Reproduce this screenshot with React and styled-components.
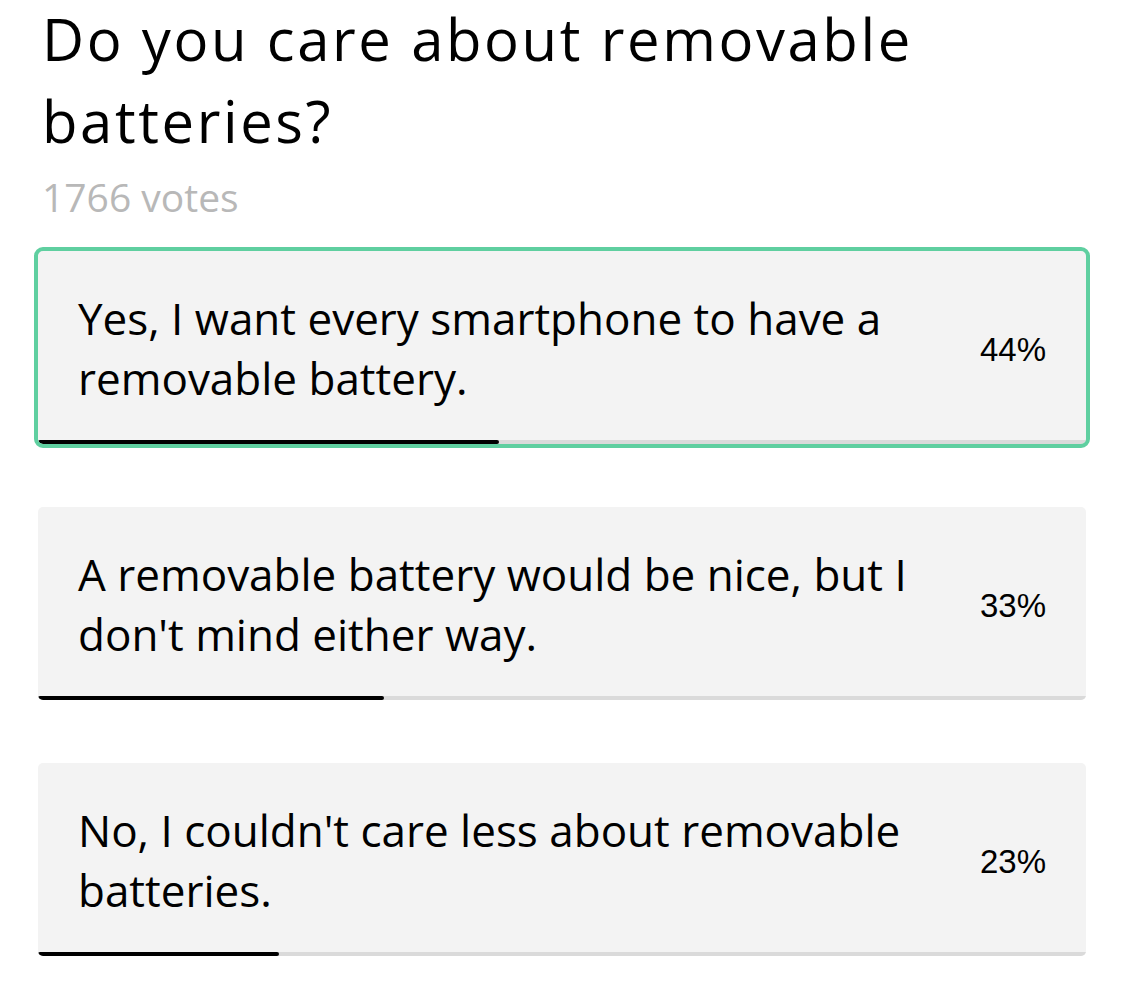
import React from "react";
import styled, { createGlobalStyle } from "styled-components";

const Global = createGlobalStyle`
  html, body { margin: 0; padding: 0; background: #fff; }
  body { font-family: "Open Sans", Lato, sans-serif; color: #000; }
`;

const Page = styled.div`
  padding: 0 39px 40px 38px;
`;

const Header = styled.header`
  padding: 0 0 0 4px;
`;

const Title = styled.h1`
  margin: -2px 0 0;
  font-family: "Open Sans", sans-serif;
  font-weight: 400;
  font-size: 58px;
  line-height: 82px;
  letter-spacing: 2.6px;
  color: #000;
  max-width: 960px;
`;

const Votes = styled.div`
  margin-top: 10px;
  font-size: 39px;
  line-height: 50px;
  color: #b8b8b8;
`;

const List = styled.div`
  margin-top: 29px;
  display: flex;
  flex-direction: column;
  gap: 63px;
`;

const Card = styled.div`
  height: 193px;
  display: flex;
  flex-direction: column;
  background: #f3f3f3;
  border-radius: 5px;
  outline: ${(p) => (p.$selected ? "4px solid #5fcfa0" : "none")};
  overflow: hidden;
`;

const Body = styled.div`
  flex: 1;
  display: flex;
  align-items: center;
  padding: 4px 40px 0;
`;

const Label = styled.div`
  flex: 1;
  font-size: 44px;
  line-height: 60px;
  color: #000;
  padding-right: 50px;
`;

const Percent = styled.div`
  margin-top: 4px;
  font-family: "Liberation Sans", Arial, sans-serif;
  font-size: 33px;
  color: #000;
`;

const Track = styled.div`
  height: 4px;
  background: #dadada;
`;

const Fill = styled.div`
  height: 100%;
  background: #000;
  border-radius: 2px;
`;

const options = [
  { label: "Yes, I want every smartphone to have a removable battery.", pct: 44, selected: true },
  { label: "A removable battery would be nice, but I don't mind either way.", pct: 33 },
  { label: "No, I couldn't care less about removable batteries.", pct: 23 },
];

export default function App() {
  return (
    <>
      <Global />
      <Page>
        <Header>
          <Title>Do you care about removable batteries?</Title>
          <Votes>1766 votes</Votes>
        </Header>
        <List>
          {options.map((o) => (
            <Card key={o.pct} $selected={o.selected}>
              <Body>
                <Label>{o.label}</Label>
                <Percent>{o.pct}%</Percent>
              </Body>
              <Track>
                <Fill style={{ width: `${o.pct}%` }} />
              </Track>
            </Card>
          ))}
        </List>
      </Page>
    </>
  );
}
